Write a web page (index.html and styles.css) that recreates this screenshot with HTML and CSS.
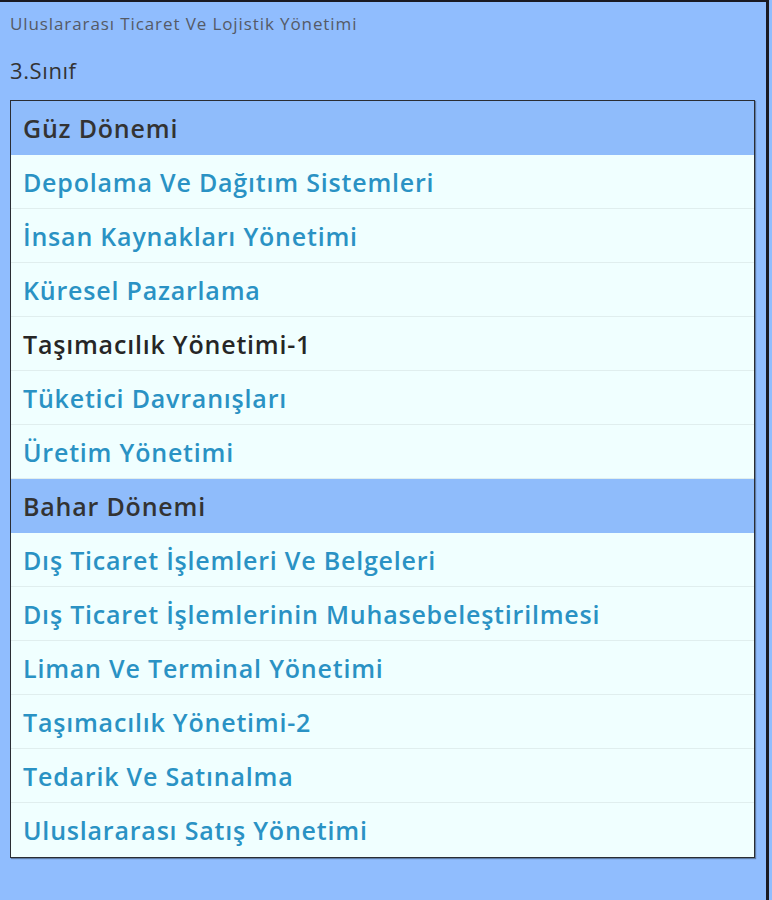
FILE: index.html
```html
<!DOCTYPE html>
<html lang="tr">
<head>
<meta charset="utf-8">
<link rel="stylesheet" href="styles.css">
</head>
<body>
<div class="frame">
  <div class="title">Uluslararası Ticaret Ve Lojistik Yönetimi</div>
  <div class="grade">3.Sınıf</div>
  <div class="list">
    <div class="head">Güz Dönemi</div>
    <a class="item">Depolama Ve Dağıtım Sistemleri</a>
    <a class="item">İnsan Kaynakları Yönetimi</a>
    <a class="item">Küresel Pazarlama</a>
    <a class="item visited">Taşımacılık Yönetimi-1</a>
    <a class="item">Tüketici Davranışları</a>
    <a class="item">Üretim Yönetimi</a>
    <div class="head">Bahar Dönemi</div>
    <a class="item">Dış Ticaret İşlemleri Ve Belgeleri</a>
    <a class="item">Dış Ticaret İşlemlerinin Muhasebeleştirilmesi</a>
    <a class="item">Liman Ve Terminal Yönetimi</a>
    <a class="item">Taşımacılık Yönetimi-2</a>
    <a class="item">Tedarik Ve Satınalma</a>
    <a class="item last">Uluslararası Satış Yönetimi</a>
  </div>
</div>
</body>
</html>
```

FILE: styles.css
```css
html, body {
  margin: 0;
  padding: 0;
  background: #90bdfe;
}
body {
  width: 772px;
  height: 900px;
  overflow: hidden;
  font-family: "Open Sans", "Noto Sans", sans-serif;
}
.frame {
  box-sizing: border-box;
  width: 769px;
  height: 900px;
  border-top: 2px solid #1a1a22;
  border-right: 3px solid #1a1a22;
  padding: 12px 0 0 10px;
}
.title {
  font-size: 17px;
  line-height: 20px;
  letter-spacing: 0.9px;
  color: #555a66;
}
.grade {
  margin-top: 23px;
  font-size: 22px;
  line-height: 26px;
  letter-spacing: 0.6px;
  color: #333;
}
.list {
  margin-top: 17px;
  width: 745px;
  box-sizing: border-box;
  border: 1px solid #2a2d33;
  box-shadow: 1px 1px 1px rgba(0,0,0,0.35);
  background: #f0ffff;
  display: flex;
  flex-direction: column;
}
.head {
  height: 54px;
  line-height: 54px;
  padding-left: 12px;
  background: #8fbcfb;
  color: #333;
  font-size: 25px;
  letter-spacing: 0.8px;
  font-weight: 600;
}
.item {
  display: block;
  height: 54px;
  box-sizing: border-box;
  line-height: 54px;
  padding-left: 12px;
  color: #2a92c4;
  font-size: 25px;
  letter-spacing: 0.8px;
  font-weight: 600;
  border-bottom: 1px solid #e0eeee;
}
.item.visited {
  color: #262626;
}
.item.last {
  border-bottom: none;
}
```
